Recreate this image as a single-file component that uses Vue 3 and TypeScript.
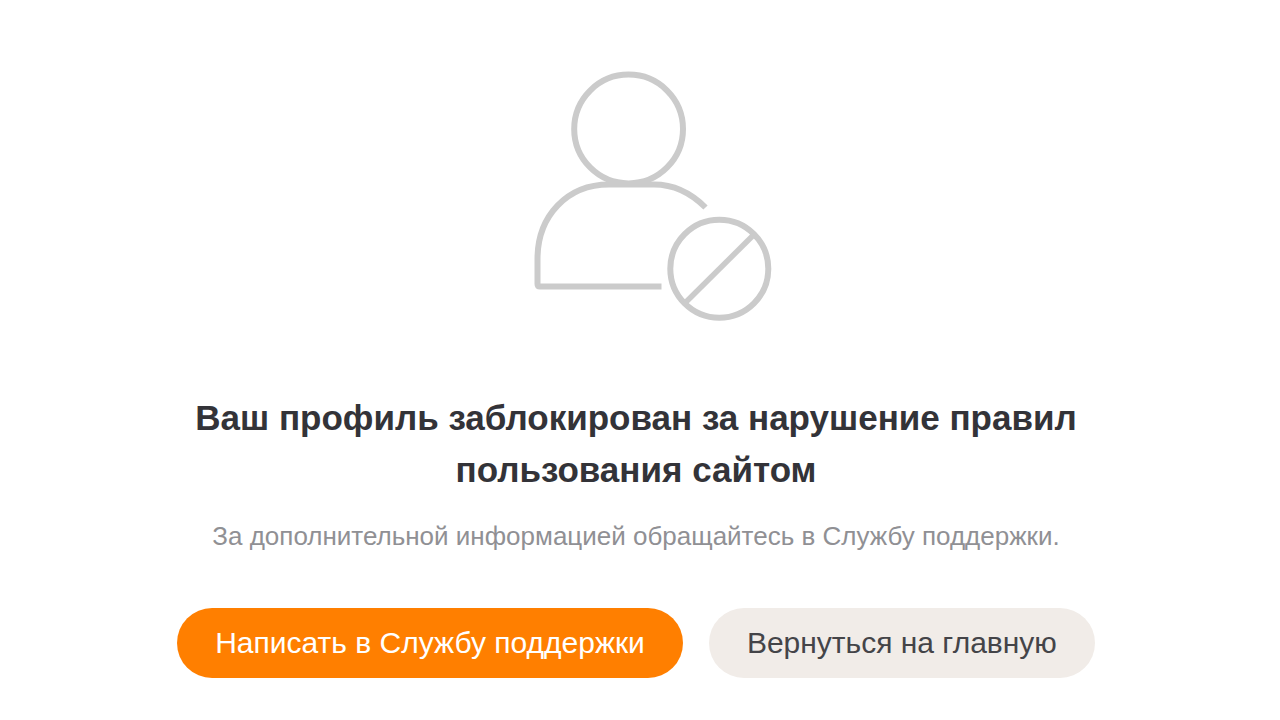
<script setup lang="ts">
const title: string = 'Ваш профиль заблокирован за нарушение правил пользования сайтом'
const hint: string = 'За дополнительной информацией обращайтесь в Службу поддержки.'
</script>

<template>
  <main class="page">
    <svg class="icon" viewBox="0 0 240 252" aria-hidden="true">
      <g fill="none" stroke="#cbcbcb" stroke-width="6">
        <circle cx="95.6" cy="59" r="54.4" />
        <path d="M172.500 137.500C157 122 141 114.500 121 114.500H76C34 114.500 4.500 146 4.500 189V214Q4.500 216.500 7 216.500H128.500" stroke-linejoin="round" />
        <circle cx="186.300" cy="198.800" r="49" />
        <path d="M152 233L220.500 165" stroke-width="5.500" />
      </g>
    </svg>
    <h1 class="title">{{ title }}</h1>
    <p class="hint">{{ hint }}</p>
    <div class="actions">
      <button class="button primary" type="button">Написать в Службу поддержки</button>
      <button class="button secondary" type="button">Вернуться на главную</button>
    </div>
  </main>
</template>

<style>
body {
  margin: 0;
  background: #fff;
}
</style>

<style scoped>
.page {
  display: flex;
  flex-direction: column;
  align-items: center;
  box-sizing: border-box;
  min-height: 100vh;
  padding: 70px 24px 42px 16px;
  font-family: "Liberation Sans", Arial, sans-serif;
  text-align: center;
}
.icon {
  width: 240px;
  height: 252px;
  margin-left: 34px;
}
.title {
  max-width: 900px;
  margin: 70px 0 0;
  color: #333338;
  font-size: 35px;
  line-height: 52px;
  font-weight: 700;
}
.hint {
  margin: 22px 0 0;
  color: #909094;
  font-size: 26px;
  line-height: 36px;
}
.actions {
  display: flex;
  flex-wrap: wrap;
  justify-content: center;
  gap: 26px;
  margin-top: 54px;
}
.button {
  height: 70px;
  padding: 0 38px;
  border: 0;
  border-radius: 35px;
  font-family: inherit;
  font-size: 30px;
  line-height: 36px;
  cursor: pointer;
}
.primary {
  background: #ff7f00;
  color: #fff;
}
.secondary {
  background: #f1ece8;
  color: #444448;
}
</style>
